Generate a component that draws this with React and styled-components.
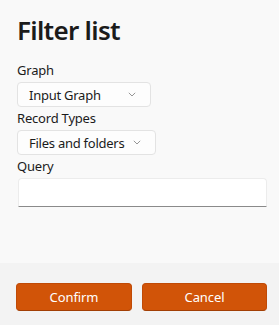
import React from "react";
import styled, { createGlobalStyle } from "styled-components";

const GlobalStyle = createGlobalStyle`
  html, body {
    margin: 0;
    padding: 0;
    background: #f9f9f9;
    font-family: "Noto Sans", "Open Sans", sans-serif;
    color: #1b1b1b;
  }
`;

function Chevron() {
  return (
    <svg width="8" height="5" viewBox="0 0 8 5" fill="none">
      <path d="M0.8 0.8 L4 4 L7.2 0.8" stroke="#8a8a8a" strokeWidth="0.9" />
    </svg>
  );
}

export default function App() {
  return (
    <Dialog>
      <GlobalStyle />
      <Body>
        <Title>Filter list</Title>
        <Label>Graph</Label>
        <Dropdown $width={134}>
          <span>Input Graph</span>
          <Chevron />
        </Dropdown>
        <Label>Record Types</Label>
        <Dropdown $width={139}>
          <span>Files and folders</span>
          <Chevron />
        </Dropdown>
        <Label>Query</Label>
        <QueryInput type="text" />
      </Body>
      <Footer>
        <PrimaryButton $width={116}>Confirm</PrimaryButton>
        <PrimaryButton $width={125}>Cancel</PrimaryButton>
      </Footer>
    </Dialog>
  );
}

const Dialog = styled.div`
  width: 279px;
  height: 325px;
  display: flex;
  flex-direction: column;
  background: #f9f9f9;
`;

const Body = styled.div`
  flex: 1;
  display: flex;
  flex-direction: column;
  align-items: flex-start;
  padding: 12px 13px 0 17px;
`;

const Title = styled.h1`
  margin: 0 0 12px 0;
  font-size: 26px;
  line-height: 36px;
  font-weight: 600;
  color: #1b1b1b;
  letter-spacing: -0.7px;
`;

const Label = styled.div`
  font-size: 13px;
  line-height: 20px;
  letter-spacing: -0.2px;
  color: #1b1b1b;
  margin-bottom: 2px;
`;

const Dropdown = styled.div`
  box-sizing: border-box;
  width: ${(p) => p.$width}px;
  height: 25px;
  display: flex;
  align-items: center;
  gap: 6px;
  padding: 0 14px 0 11px;
  background: #fdfdfd;
  border: 1px solid #e3e3e3;
  border-radius: 4px;
  font-size: 13px;
  letter-spacing: -0.25px;
  white-space: nowrap;
  color: #1b1b1b;
  margin-bottom: 1px;

  svg {
    margin-left: auto;
    flex-shrink: 0;
  }
`;

const QueryInput = styled.input`
  box-sizing: border-box;
  width: 249px;
  height: 29px;
  margin: 0 0 0 1px;
  background: #ffffff;
  border: 1px solid #ececec;
  border-bottom: 1px solid #8a8a8a;
  border-radius: 4px 4px 0 0;
  outline: none;
  font-family: inherit;
  font-size: 13px;
`;

const Footer = styled.div`
  height: 62px;
  box-sizing: border-box;
  display: flex;
  gap: 10px;
  padding: 20px 0 0 16px;
  background: #f3f3f3;
`;

const PrimaryButton = styled.button`
  box-sizing: border-box;
  width: ${(p) => p.$width}px;
  height: 28px;
  background: #d15408;
  border: 1px solid #c04a06;
  border-bottom-color: #a23f05;
  border-radius: 4px;
  color: #ffffff;
  font-family: inherit;
  font-size: 13px;
  letter-spacing: -0.1px;
  padding: 0;
`;
